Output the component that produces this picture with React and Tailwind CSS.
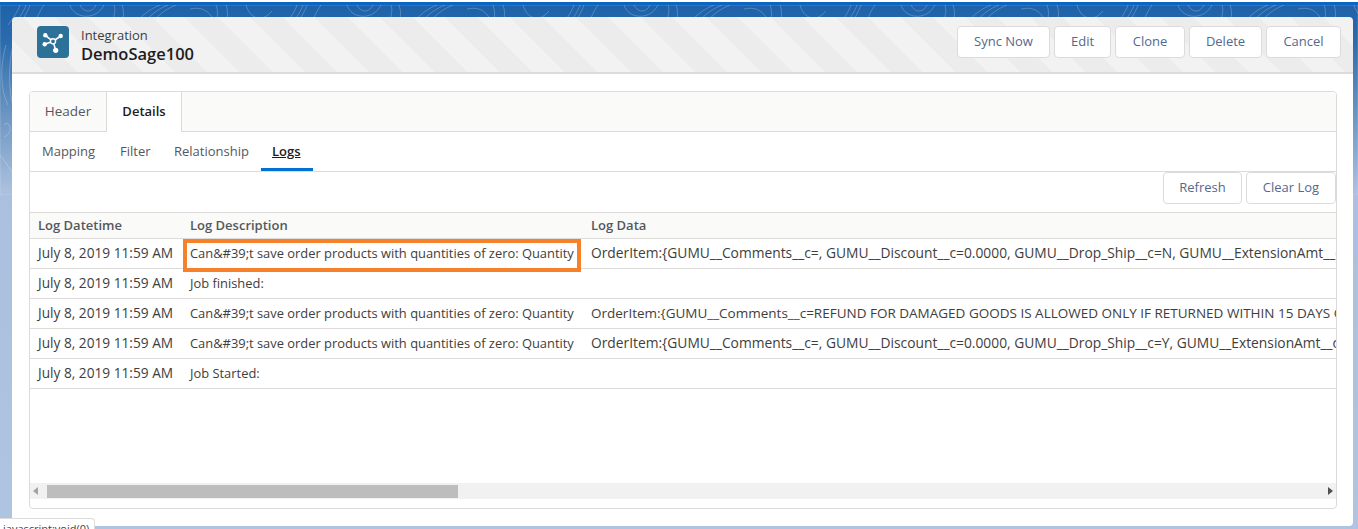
import React from "react";

const rows = [
  {
    desc: "Can&#39;t save order products with quantities of zero: Quantity",
    data: "OrderItem:{GUMU__Comments__c=, GUMU__Discount__c=0.0000, GUMU__Drop_Ship__c=N, GUMU__ExtensionAmt__c=0.00",
    size: "text-[13.8px]",
  },
  { desc: "Job finished:", data: "", size: "" },
  {
    desc: "Can&#39;t save order products with quantities of zero: Quantity",
    data: "OrderItem:{GUMU__Comments__c=REFUND FOR DAMAGED GOODS IS ALLOWED ONLY IF RETURNED WITHIN 15 DAYS OF PURCHASE",
    size: "text-[13.5px]",
  },
  {
    desc: "Can&#39;t save order products with quantities of zero: Quantity",
    data: "OrderItem:{GUMU__Comments__c=, GUMU__Discount__c=0.0000, GUMU__Drop_Ship__c=Y, GUMU__ExtensionAmt__c=0.00",
    size: "text-[13.8px]",
  },
  { desc: "Job Started:", data: "", size: "" },
];

const Btn = ({ children, className = "" }) => (
  <button className={`h-8 rounded border border-[#dddbda] bg-white text-[13px] text-[#54698d] ${className}`}>
    {children}
  </button>
);

const IntegrationIcon = () => (
  <svg viewBox="0 0 32 32" className="h-8 w-8">
    <path d="M8.3 9.3 L16 15.3 M7.7 18.3 L16 15.3 M23.7 10 L16 15.3 M18.7 24.3 L16 15.3" stroke="white" strokeWidth="1.6" fill="none" />
    <circle cx="16" cy="15.3" r="2.6" fill="#2c7198" stroke="white" strokeWidth="1.4" />
    <circle cx="8.3" cy="9.3" r="2.2" fill="white" />
    <circle cx="7.7" cy="18.3" r="2.2" fill="white" />
    <circle cx="23.7" cy="10" r="2.2" fill="white" />
    <circle cx="18.7" cy="24.3" r="2.6" fill="white" />
  </svg>
);

// faint contour lines behind the page, only seen in the strip on top and on the left
const Contours = () => (
  <svg className="absolute inset-x-0 top-[5px] h-[190px] w-full" fill="none" stroke="white" strokeOpacity="0.22" strokeWidth="1">
    <defs>
      <pattern id="contour" width="277" height="190" patternUnits="userSpaceOnUse">
        <path d="M8 20 C14 12 18 6 20 0 M14 20 C20 12 24 6 26 0 M20 20 C24 12 28 6 30 0 M34 20 C38 10 40 6 44 0" />
        <path d="M70 0 C74 14 96 16 104 0 M80 0 C84 8 92 8 96 0" />
        <path d="M112 20 C114 10 116 6 114 0 M122 20 C124 10 124 6 122 0" />
        <path d="M134 20 C142 10 150 4 160 0 M142 20 C150 10 158 4 168 0 M150 20 C158 10 166 4 176 0" />
        <path d="M190 4 C200 2 206 4 212 12 M216 20 C218 10 218 6 216 0 M226 20 C228 10 228 6 226 0" />
        <path d="M246 0 C250 14 262 18 272 6" />
        <path d="M6 40 C0 60 0 85 8 100 M14 36 C8 60 8 85 14 104 M4 120 C10 114 14 128 4 132 M0 150 C8 160 14 172 20 178" />
      </pattern>
    </defs>
    <rect width="100%" height="100%" fill="url(#contour)" />
  </svg>
);

export default function App() {
  return (
    <div className="relative h-[529px] overflow-hidden bg-[linear-gradient(#1c60a8_0px,#2a6bad_40px,#5f8dbd_100px,#aac0de_190px,#aec4e0_529px)] pt-[17px] pl-3 pr-[5px] font-['Open_Sans',sans-serif] text-[13px] text-[#3e3e3c]">
      <Contours />
      <div className="absolute inset-x-0 top-0 h-[2px] bg-white" />
      <div className="absolute inset-x-0 top-[2px] h-[3px] bg-[#0b66c3]" />

      <div className="relative flex h-[57px] justify-between rounded-t border-b-2 border-[#dddbda] bg-[repeating-linear-gradient(45deg,#f3f2f2_0px,#f3f2f2_23px,#ececec_23px,#ececec_46px)] pt-[9px] pl-[25px] pr-3">
        <div className="flex h-8 gap-3">
          <div className="h-8 w-8 rounded bg-[#2c7198]">
            <IntegrationIcon />
          </div>
          <div>
            <div className="text-[13px] leading-[18px] text-[#3e3e3c]">Integration</div>
            <div className="text-[16.5px] leading-[20px] font-semibold text-[#1d1d1d]">DemoSage100</div>
          </div>
        </div>
        <div className="flex gap-1">
          <Btn className="w-[93px]">Sync Now</Btn>
          <Btn className="w-[57px]">Edit</Btn>
          <Btn className="w-[70px]">Clone</Btn>
          <Btn className="w-[73px]">Delete</Btn>
          <Btn className="w-[75px]">Cancel</Btn>
        </div>
      </div>

      <div className="relative h-[452px] rounded-b bg-white pt-[17px] pb-[16px] pl-[17px] pr-4">
        <div className="flex h-[418px] flex-col overflow-hidden rounded border border-[#dddbda] bg-white">
          <div className="flex h-10 shrink-0 border-b border-[#dddbda] bg-[#fafaf9] text-[13.5px]">
            <div className="flex w-[76px] items-center justify-center text-[#54585e]">Header</div>
            <div className="relative -mb-px flex w-[76px] items-center justify-center border-x border-[#dddbda] bg-white text-[13px] font-semibold text-[#1d1d1d]">
              Details
            </div>
          </div>

          <div className="flex h-10 shrink-0 border-b border-[#dddbda]">
            <div className="flex w-[78px] items-center pl-3 text-[#54585e]">Mapping</div>
            <div className="flex w-[54px] items-center pl-3 text-[#54585e]">Filter</div>
            <div className="flex w-[99px] items-center pl-3 text-[#54585e]">Relationship</div>
            <div className="flex w-[52px] items-center border-b-[3px] border-[#0070d2] pt-[4px] pl-[11px] font-semibold text-[#1d1d1d] underline">
              Logs
            </div>
          </div>

          <div className="flex h-[41px] shrink-0 justify-end gap-1 border-b border-[#dddbda]">
            <Btn className="w-[79px]">Refresh</Btn>
            <Btn className="w-[90px]">Clear Log</Btn>
          </div>

          <div className="flex h-[26px] shrink-0 items-center border-b border-[#dddbda] bg-[#fafaf9] pt-px font-semibold text-[#54585e]">
            <div className="w-[152px] shrink-0 pl-2">Log Datetime</div>
            <div className="w-[401px] shrink-0 pl-2">Log Description</div>
            <div className="pl-2">Log Data</div>
          </div>

          <div className="flex-1">
            {rows.map((row, i) => (
              <div key={i} className="relative flex h-[30px] items-center border-b border-[#dddbda] whitespace-nowrap">
                <div className="w-[152px] shrink-0 pl-2 text-[13.7px]">July 8, 2019 11:59 AM</div>
                <div className="w-[401px] shrink-0 overflow-hidden pt-px pl-2 text-[12.9px]">{row.desc}</div>
                <div className={`min-w-0 flex-1 overflow-hidden pl-2 ${row.size}`}>{row.data}</div>
                {i === 0 && (
                  <div className="absolute top-0 left-[153px] h-[33px] w-[398px] border-[4px] border-[#f6812a]" />
                )}
              </div>
            ))}
          </div>

          <div className="mb-[9px] flex h-4 shrink-0 items-center bg-[#f1f1f1] px-[3px]">
            <span className="h-0 w-0 border-y-[4px] border-r-[5px] border-y-transparent border-r-[#a3a3a3]" />
            <div className="ml-[9px] h-[13px] w-[411px] bg-[#bdbdbd]" />
            <span className="ml-auto h-0 w-0 border-y-[4px] border-l-[5px] border-y-transparent border-l-[#505050]" />
          </div>
        </div>
      </div>

      <div className="absolute bottom-0 left-0 h-[11px] w-[95px] overflow-hidden rounded-tr border-t border-r border-[#dddbda] bg-white pt-[3px] pl-[3px] text-[11px] leading-[14px] text-[#444]">
        javascript:void(0)
      </div>
    </div>
  );
}
